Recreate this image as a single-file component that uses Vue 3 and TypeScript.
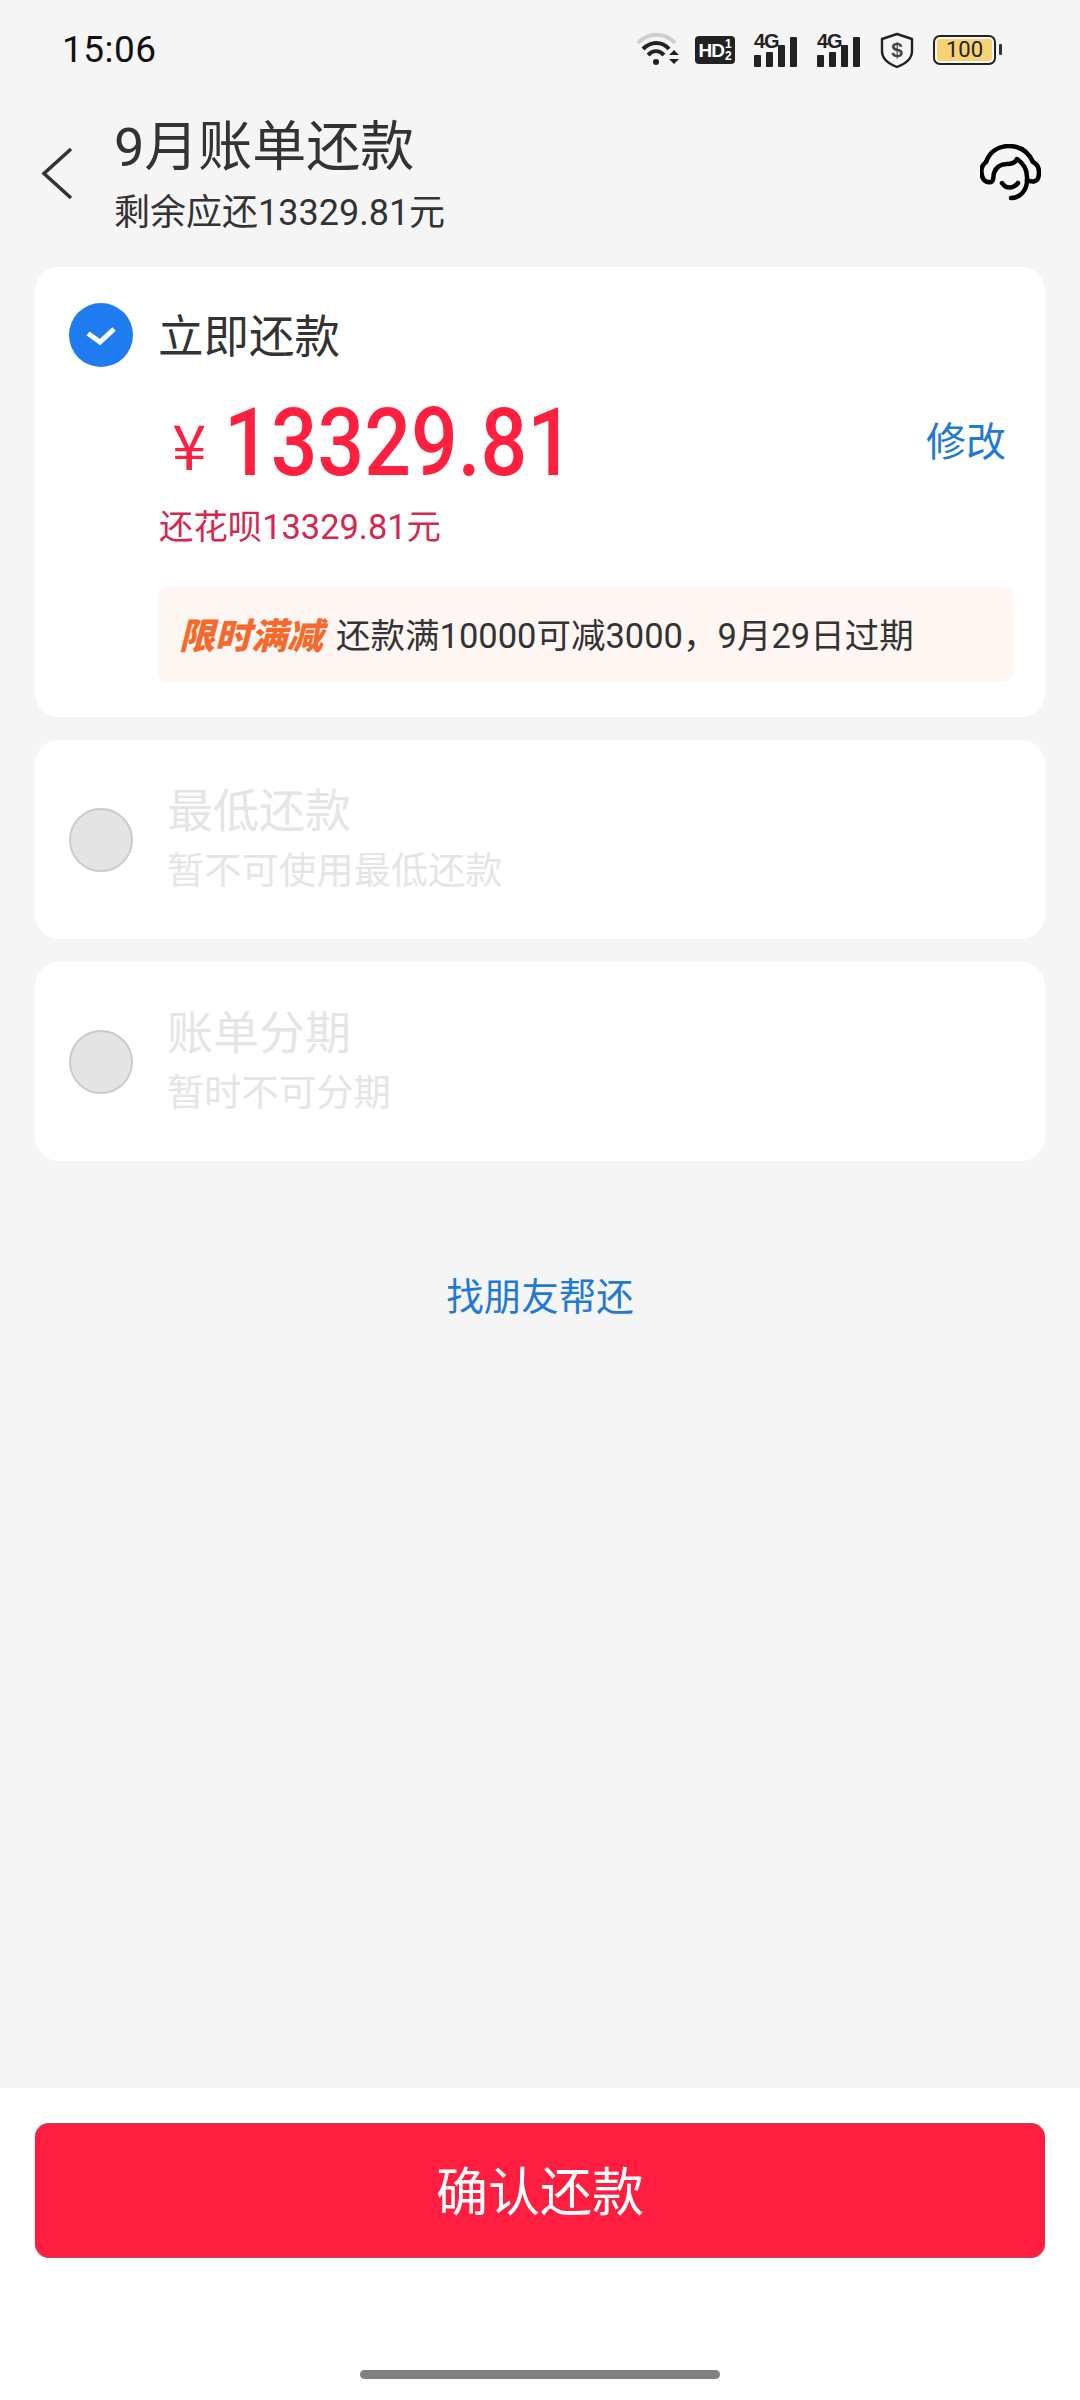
<script setup lang="ts">
const disabledOptions: { title: string; note: string }[] = [
  { title: '最低还款', note: '暂不可使用最低还款' },
  { title: '账单分期', note: '暂时不可分期' },
]
</script>

<template>
  <div class="page">
    <div class="status">
      <span class="time">15:06</span>
      <div class="status-icons">
        <svg class="wifi" width="44" height="36" viewBox="0 0 44 36">
          <path d="M2 11C12 0 29 0 39 11" fill="none" stroke="#cfcfcf" stroke-width="4" />
          <path d="M7 17C15 9 26 9 33 17" fill="none" stroke="#222" stroke-width="4" />
          <path d="M12 23C17 18 23 18 28 23" fill="none" stroke="#222" stroke-width="4" />
          <circle cx="20" cy="30" r="3" fill="#222" />
          <path d="M33 23L38 18L43 23ZM33 27H43L38 32Z" fill="#222" />
        </svg>
        <div class="hd"><span class="hd-main">HD</span><span class="hd-sub"><i>1</i><i>2</i></span></div>
        <div class="sig" v-for="n in 2" :key="n">
          <span class="sig-label">4G</span>
          <span class="bar b1"></span><span class="bar b2"></span><span class="bar b3"></span><span class="bar b4"></span>
        </div>
        <svg class="shield" width="34" height="37" viewBox="0 0 34 37">
          <path d="M17 2L32 7V19C32 27 25 32 17 35C9 32 2 27 2 19V7Z" fill="none" stroke="#222" stroke-width="2.4" stroke-linejoin="round" />
          <text x="17" y="25" text-anchor="middle" class="dollar">$</text>
        </svg>
        <div class="battery"><span class="battery-in">100</span></div>
      </div>
    </div>

    <header class="head">
      <svg class="back" width="32" height="53" viewBox="0 0 32 53">
        <path d="M30 2L3 26.500L30 51" fill="none" stroke="#333" stroke-width="3.600" />
      </svg>
      <div class="head-text">
        <div class="title">9月账单还款</div>
        <div class="subtitle">剩余应还13329.81元</div>
      </div>
      <svg class="agent" width="61" height="58" viewBox="0 0 61 58">
        <path d="M6 18C10 7 19 2 29 2C39 2 48 7 53 18" fill="none" stroke="#000" stroke-width="4.500" />
        <path d="M6 18C2 21 1 25 1.500 29C2 36 6 39 11 38C14 37 13 33 14 29C16 23 21 20 27 20C31 20 35 19 37 15C43 19 47 25 47 33C48 45 41 54 31 54" fill="none" stroke="#000" stroke-width="4.500" stroke-linecap="round" stroke-linejoin="round" />
        <path d="M47 36C49 37 52 38 55 37C59 36 59 31 59 28C59 24 57 20 53 18" fill="none" stroke="#000" stroke-width="4.500" stroke-linecap="round" />
        <path d="M22 39C26 45 33 45 38 39" fill="none" stroke="#000" stroke-width="4.500" stroke-linecap="round" />
      </svg>
    </header>

    <main class="main">
      <section class="card active">
        <div class="pay-row">
          <span class="check">
            <svg width="36" height="28" viewBox="0 0 36 28">
              <path d="M5 12.500L17 21L31 8" fill="none" stroke="#fff" stroke-width="5" />
            </svg>
          </span>
          <span class="pay-title">立即还款</span>
        </div>
        <div class="amount-row">
          <span class="yen">¥</span>
          <span class="amount">13329.81</span>
          <span class="edit">修改</span>
        </div>
        <div class="huabei">还花呗13329.81元</div>
        <div class="promo">
          <span class="promo-tag">限时满减</span>
          <span class="promo-text">还款满10000可减3000，9月29日过期</span>
        </div>
      </section>

      <section class="card off" v-for="item in disabledOptions" :key="item.title">
        <span class="radio"></span>
        <div class="off-body">
          <div class="off-title">{{ item.title }}</div>
          <div class="off-note">{{ item.note }}</div>
        </div>
      </section>

      <div class="friend">找朋友帮还</div>
    </main>

    <footer class="foot">
      <button class="confirm" type="button">确认还款</button>
      <div class="home"></div>
    </footer>
  </div>
</template>

<style>
html, body { margin: 0; background: #f5f5f6; }
</style>

<style scoped>
.page {
  width: 1080px;
  height: 2400px;
  display: flex;
  flex-direction: column;
  background: #f5f5f6;
  font-family: Roboto, "Noto Sans CJK SC", sans-serif;
  color: #333;
  overflow: hidden;
}
.status {
  height: 100px;
  flex: none;
  display: flex;
  align-items: center;
  justify-content: space-between;
  padding: 0 84px 0 62px;
  box-sizing: border-box;
}
.time { font-size: 37px; color: #111; line-height: 100px; letter-spacing: 0.5px; }
.status-icons { display: flex; align-items: center; }
.wifi { margin-right: 15px; }
.hd {
  width: 40px; height: 28px; background: #222; border-radius: 4px; color: #fff;
  display: flex; align-items: center; justify-content: center; margin-right: 19px;
  font-family: "Liberation Sans", sans-serif; font-weight: 700; line-height: 1;
}
.hd-main { font-size: 19px; letter-spacing: -1px; }
.hd-sub { display: flex; flex-direction: column; margin-left: 1px; font-size: 12px; line-height: 12px; }
.hd-sub i { font-style: normal; }
.sig { position: relative; width: 46px; height: 34px; display: flex; align-items: flex-end; gap: 5px; margin-right: 17px; }
.sig-label {
  position: absolute; left: 0; top: -2px; font-size: 20px; line-height: 20px; font-weight: 700;
  letter-spacing: -1px; color: #222; font-family: "Liberation Sans", sans-serif;
}
.bar { width: 7px; background: #222; border-radius: 1px; }
.b1 { height: 12px; }
.b2 { height: 15px; }
.b3 { height: 22px; }
.b4 { height: 30px; }
.shield { margin-right: 19px; }
.dollar { font-size: 21px; font-weight: 700; fill: #444; font-family: "Liberation Sans", sans-serif; }
.battery {
  position: relative; width: 63px; height: 30px; border: 2.500px solid #222; border-radius: 7px;
  box-sizing: border-box; padding: 2px;
}
.battery::after {
  content: ""; position: absolute; right: -8px; top: 7px; width: 3px; height: 11px;
  background: #333; border-radius: 1px;
}
.battery-in {
  display: block; height: 100%; background: #f6d272; border-radius: 3px; text-align: center;
  font-size: 22px; line-height: 21px; color: #222; font-family: Roboto, sans-serif;
}

.head {
  height: 167px;
  flex: none;
  display: flex;
  align-items: flex-start;
  box-sizing: border-box;
  padding: 0 39px 0 41px;
}
.back { margin-top: 47px; flex: none; }
.head-text { margin-left: 41px; flex: 1; }
.title { font-size: 54px; line-height: 64px; margin-top: 16px; color: #333; }
.subtitle { font-size: 36px; line-height: 44px; margin-top: 11px; color: #333; }
.agent { margin-top: 44px; flex: none; }

.main { flex: 1; display: flex; flex-direction: column; gap: 23px; padding: 0 35px; }
.card { background: #fff; border-radius: 24px; box-sizing: border-box; }
.active { height: 450px; padding: 36px 34px 0; }
.pay-row { display: flex; align-items: center; height: 64px; }
.check {
  width: 64px; height: 64px; border-radius: 50%; background: #1f7cf0;
  display: flex; align-items: center; justify-content: center; flex: none;
}
.pay-title { margin: 5px 0 0 25px; font-size: 45.500px; line-height: 64px; color: #333; }
.amount-row { display: flex; align-items: center; height: 100px; margin-top: 26px; padding-left: 103px; }
.yen { font-size: 62px; color: #ff1f3f; line-height: 100px; width: 52px; flex: none; font-family: "Noto Sans CJK SC", sans-serif; }
.amount {
  font-size: 94px; font-weight: 500; color: #ff1f3f; line-height: 100px; display: inline-block;
  transform: scaleX(0.875); transform-origin: left center; flex: 1; white-space: nowrap;
}
.edit { color: #1f7ad6; font-size: 40px; line-height: 100px; margin-right: 5px; }
.huabei { margin: 12px 0 0 90px; font-size: 34.400px; line-height: 44px; color: #d4284f; }
.promo {
  margin: 38px 0 0 89px; width: 855px; height: 95px; box-sizing: border-box;
  background: #fdf6f3; border-radius: 10px; display: flex; align-items: center; padding: 0 0 3px 21px;
}
.promo-tag {
  font-size: 36px; font-weight: 900; font-style: italic; color: #f56a2c; width: 157px; flex: none;
  letter-spacing: 0; white-space: nowrap;
}
.promo-text { font-size: 34.500px; color: #333; white-space: nowrap; }

.off { height: 199px; display: flex; align-items: center; padding-left: 34px; }
.radio {
  width: 64px; height: 64px; border-radius: 50%; background: #e4e4e4; border: 2px solid #cbcbcb;
  box-sizing: border-box; flex: none; margin-right: 34px;
}
.off-body { margin-top: -2px; }
.off-title { font-size: 46px; line-height: 60px; color: #e5e5e5; }
.off-note { font-size: 37.300px; line-height: 50px; color: #e5e5e5; margin-top: 5px; }

.friend { text-align: center; color: #1f7ad6; font-size: 37.500px; line-height: 50px; margin-top: 88px; }

.foot { height: 312px; flex: none; background: #fff; position: relative; padding: 35px 35px 0; box-sizing: border-box; }
.confirm {
  display: block; width: 100%; height: 135px; background: #ff1e40; color: #fff; border: 0;
  border-bottom: 1px solid #b0486c; border-top: 1px solid #b0486c; border-radius: 14px; font-size: 52px; font-family: inherit; padding: 0 0 5px;
}
.home { position: absolute; left: 360px; top: 282px; width: 360px; height: 9px; border-radius: 5px; background: #808080; }
</style>
